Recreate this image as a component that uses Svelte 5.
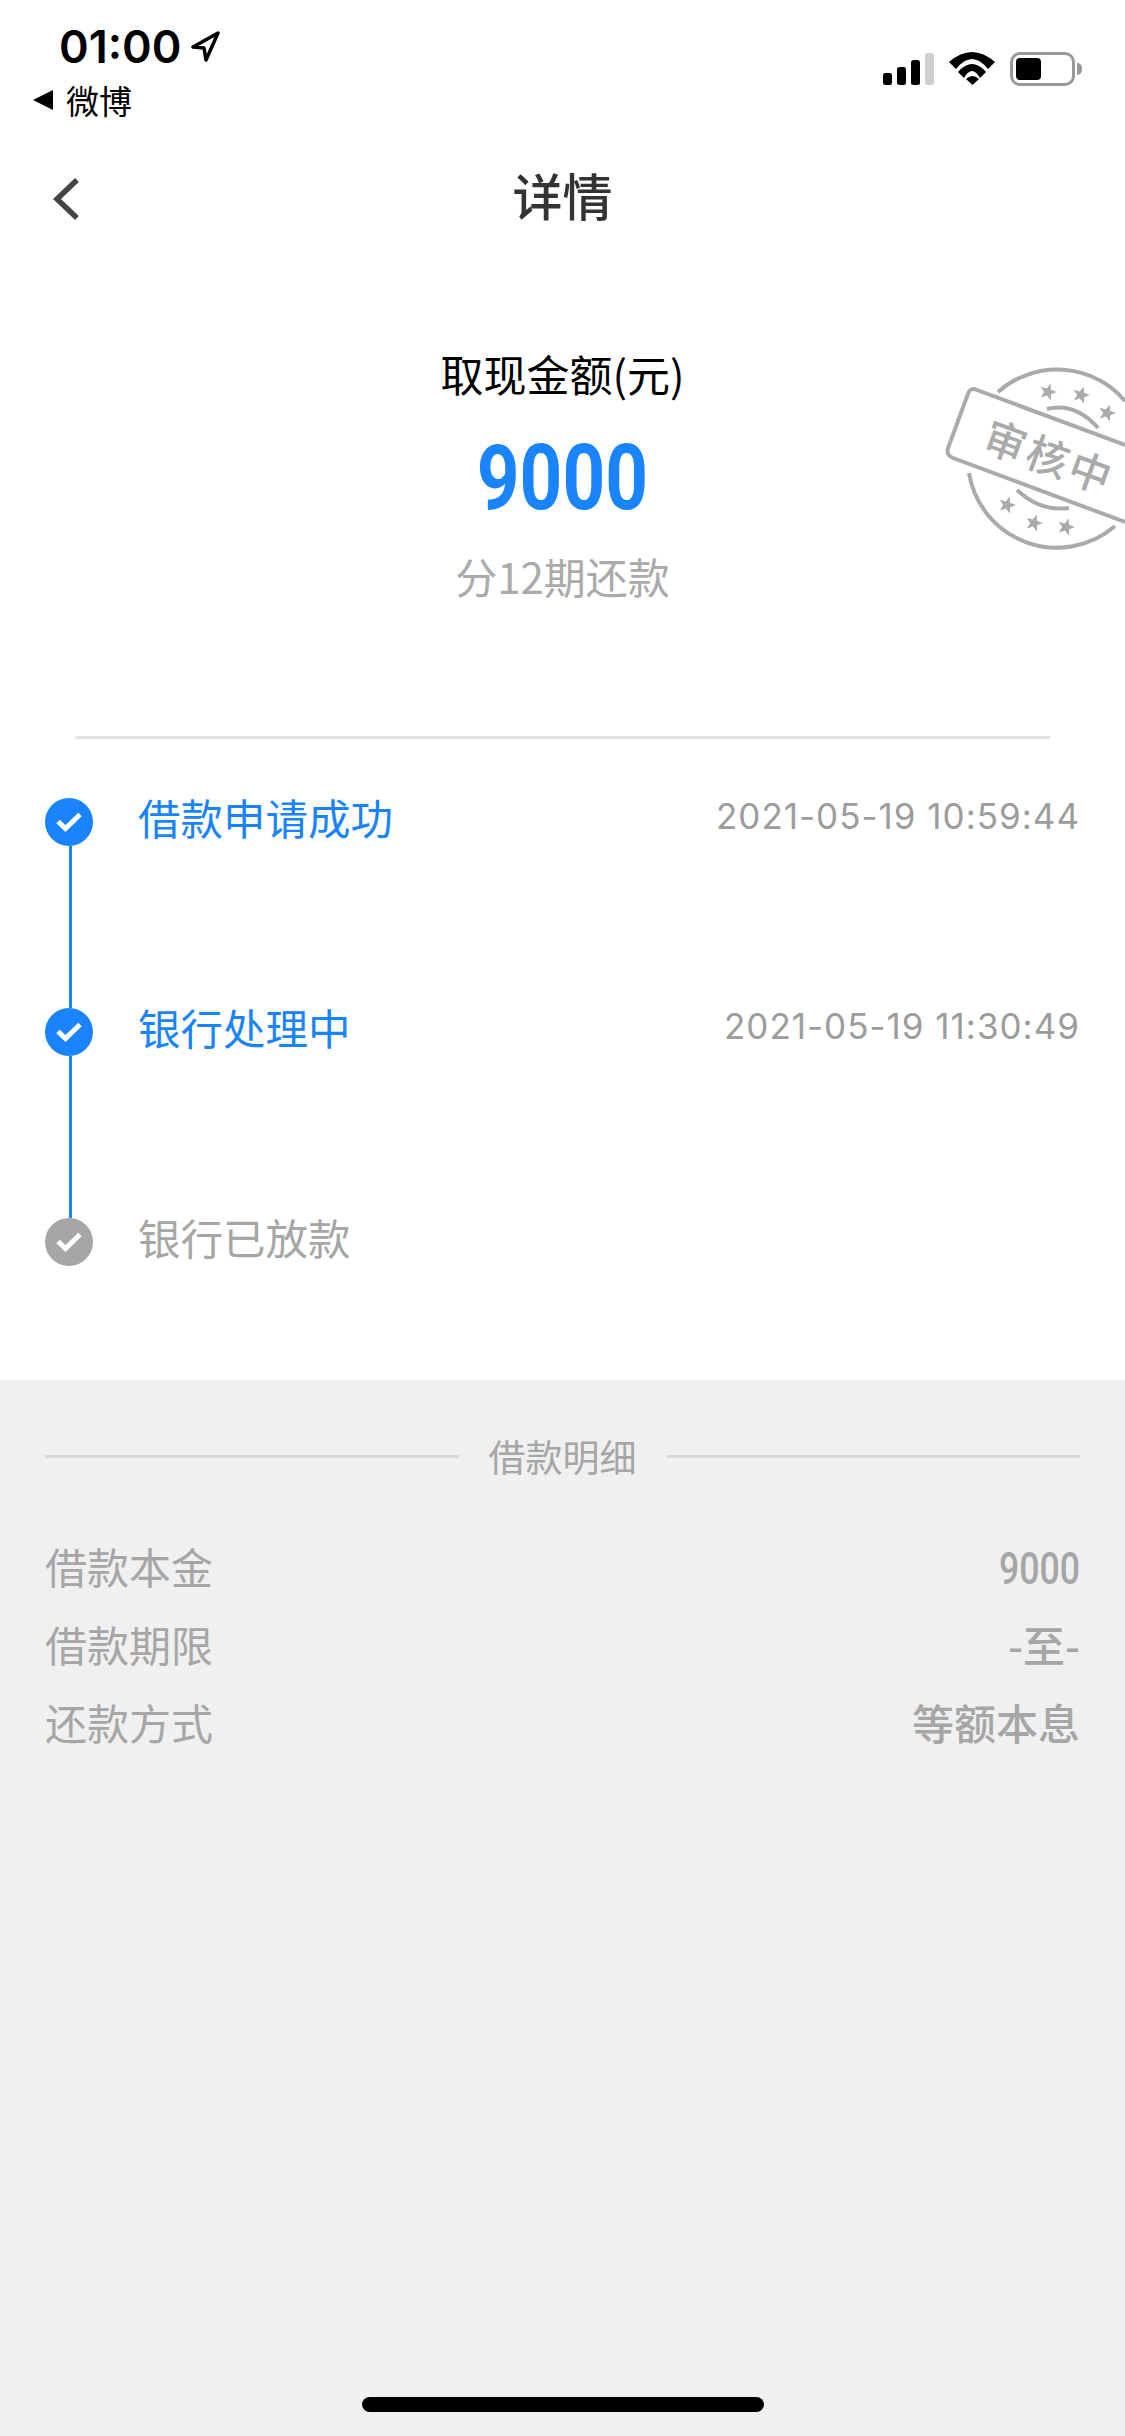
<script>
    const steps = [
        { title: '借款申请成功', time: '2021-05-19 10:59:44', done: true },
        { title: '银行处理中', time: '2021-05-19 11:30:49', done: true },
        { title: '银行已放款', time: '', done: false }
    ]

    const details = [
        { label: '借款本金', value: '9000', num: true },
        { label: '借款期限', value: '-至-' },
        { label: '还款方式', value: '等额本息' }
    ]

    const stars = [[1048, 392], [1081, 395], [1107, 413], [1007, 505], [1034, 523], [1066, 527]]

    function starPoints(cx, cy) {
        let pts = []
        for (let i = 0; i < 10; i++) {
            const r = i % 2 ? 3.8 : 9
            const a = -Math.PI / 2 + 0.3 + i * Math.PI / 5
            pts.push((cx + r * Math.cos(a)).toFixed(1) + ',' + (cy + r * Math.sin(a)).toFixed(1))
        }
        return pts.join(' ')
    }
</script>

<div class="page">
    <div class="status">
        <div class="status-left">
            <div class="clock">
                <span>01:00</span>
                <svg class="arrow" width="30" height="32" viewBox="0 0 30 32">
                    <path d="M28 2 L3 16 L14 17 L16 29 Z" fill="none" stroke="#000" stroke-width="3.5" stroke-linejoin="round"/>
                </svg>
            </div>
            <div class="backapp">
                <svg width="22" height="20" viewBox="0 0 22 20"><path d="M21 0 V20 L1 10 Z" fill="#000"/></svg>
                <span>微博</span>
            </div>
        </div>
        <div class="status-right">
            <div class="signal">
                <i style="height: 12px"></i>
                <i style="height: 18px"></i>
                <i style="height: 25px"></i>
                <i class="off" style="height: 32px"></i>
            </div>
            <svg width="46" height="33" viewBox="0 0 46 33">
                <path d="M0 10 Q23 -10 46 10 L39 17 Q23 -3 7 17 Z" fill="#000"/>
                <path d="M9 20 Q23 4 37 20 L31 26 Q23 12 15 26 Z" fill="#000"/>
                <path d="M17 27 Q23.5 21 30 27 L23.5 33 Z" fill="#000"/>
            </svg>
            <div class="battery">
                <div class="shell"><div class="charge"></div></div>
                <div class="nub"></div>
            </div>
        </div>
    </div>

    <div class="nav">
        <svg class="back" width="28" height="44" viewBox="0 0 28 44">
            <path d="M25 3 L5 22 L25 41" fill="none" stroke="#444" stroke-width="5.5"/>
        </svg>
        <div class="title">详情</div>
    </div>

    <div class="hero">
        <div class="hero-label">取现金额(元)</div>
        <div class="hero-amount">9000</div>
        <div class="hero-sub">分12期还款</div>
        <svg class="stamp" width="205" height="200" viewBox="920 350 205 200">
            <g fill="none" stroke="#aaa" stroke-width="4">
                <path d="M998 392 A89 89 0 0 1 1125 401"/>
                <path d="M969 473 A89 89 0 0 0 1115 526"/>
                <path d="M1047 409 Q1075 402 1098 428"/>
                <path d="M1017 490 Q1040 512 1069 508"/>
                <path d="M1125 445 L977 390 Q970 387 968 394 L948 448 Q946 455 953 458 L1125 522"/>
            </g>
            {#each stars as s}
                <polygon points={starPoints(s[0], s[1])} fill="#aaa"/>
            {/each}
            <text x="1049" y="473" transform="rotate(20 1049 458)" text-anchor="middle" class="stamp-text">审核中</text>
        </svg>
    </div>

    <div class="rule"></div>

    <div class="timeline">
        {#each steps as step, i}
            <div class="step">
                <div class="rail">
                    <div class="dot" class:grey={!step.done}>
                        <svg width="26" height="20" viewBox="0 0 26 20">
                            <path d="M2 9.5 L9.5 16.5 L24 2.5" fill="none" stroke="#fff" stroke-width="5"/>
                        </svg>
                    </div>
                    {#if i < steps.length - 1}
                        <div class="line"></div>
                    {/if}
                </div>
                <div class="step-title" class:grey={!step.done}>{step.title}</div>
                {#if step.time}
                    <div class="step-time">{step.time}</div>
                {/if}
            </div>
        {/each}
    </div>

    <div class="detail">
        <div class="detail-head">
            <div class="head-line"></div>
            <span>借款明细</span>
            <div class="head-line"></div>
        </div>
        <div class="rows">
            {#each details as row}
                <div class="row">
                    <span>{row.label}</span>
                    <span class="value" class:num={row.num}>{row.value}</span>
                </div>
            {/each}
        </div>
        <div class="home"></div>
    </div>
</div>

<style>
    :global(body) {
        margin: 0;
        background: #fff;
    }
    .page {
        width: 1125px;
        height: 2436px;
        display: flex;
        flex-direction: column;
        overflow: hidden;
        font-family: "Noto Sans CJK SC", "Noto Sans", sans-serif;
        color: #000;
    }
    .status {
        height: 131px;
        display: flex;
        justify-content: space-between;
        box-sizing: border-box;
    }
    .status-left {
        padding: 24px 0 0 32px;
    }
    .clock {
        display: flex;
        align-items: center;
        height: 46px;
        padding-left: 27px;
        gap: 9px;
        font: 600 45px/46px Inter, sans-serif;
    }
    .backapp {
        display: flex;
        align-items: center;
        gap: 12px;
        height: 40px;
        margin-top: 10px;
        font-size: 33px;
        line-height: 40px;
    }
    .status-right {
        display: flex;
        align-items: flex-start;
        padding: 52px 43px 0 0;
        gap: 15px;
    }
    .signal {
        display: flex;
        align-items: flex-end;
        gap: 5px;
        height: 33px;
    }
    .signal i {
        width: 9px;
        background: #000;
        border-radius: 2.5px;
    }
    .signal i.off {
        background: #cfcfcf;
    }
    .battery {
        display: flex;
        align-items: center;
        gap: 2px;
    }
    .shell {
        width: 65px;
        height: 34px;
        box-sizing: border-box;
        border: 3px solid #999;
        border-radius: 10px;
        padding: 3px;
    }
    .charge {
        width: 25px;
        height: 100%;
        background: #000;
        border-radius: 4px;
    }
    .nub {
        width: 5px;
        height: 12px;
        background: #999;
        border-radius: 0 5px 5px 0;
    }
    .nav {
        height: 130px;
        box-sizing: border-box;
        padding-bottom: 4px;
        position: relative;
        display: flex;
        align-items: center;
        justify-content: center;
    }
    .back {
        position: absolute;
        left: 52px;
        top: 46px;
    }
    .title {
        font-size: 50px;
        font-weight: 500;
        line-height: 60px;
        color: #333;
    }
    .hero {
        position: relative;
        height: 475px;
        box-sizing: border-box;
        padding-top: 84px;
        display: flex;
        flex-direction: column;
        align-items: center;
    }
    .hero-label {
        font-size: 43px;
        line-height: 56px;
    }
    .hero-amount {
        font-family: Roboto, sans-serif;
        font-weight: 700;
        font-size: 91px;
        line-height: 100px;
        margin-top: 27px;
        color: #1a84ff;
        transform: scaleX(0.82);
    }
    .hero-sub {
        font-size: 42px;
        line-height: 56px;
        margin-top: 20px;
        color: #aaa;
    }
    .stamp {
        position: absolute;
        right: 0;
        top: 89px;
    }
    .stamp-text {
        font-size: 42px;
        letter-spacing: 3px;
        fill: #aaa;
        font-weight: 500;
    }
    .rule {
        height: 3px;
        margin: 0 75px;
        background: #e2e2e2;
    }
    .timeline {
        flex: none;
        height: 641px;
        box-sizing: border-box;
        padding: 59px 45px 0 45px;
    }
    .step {
        display: flex;
        height: 210px;
    }
    .rail {
        width: 48px;
        display: flex;
        flex-direction: column;
        align-items: center;
    }
    .dot {
        flex: none;
        width: 48px;
        height: 48px;
        border-radius: 50%;
        background: #1a84ff;
        display: flex;
        align-items: center;
        justify-content: center;
    }
    .dot.grey {
        background: #a6a6a6;
    }
    .line {
        flex: 1;
        width: 3px;
        margin-left: 3px;
        background: #1a84ff;
    }
    .step-title {
        margin-left: 45px;
        font-size: 42.5px;
        line-height: 38px;
        color: #1a84ff;
        flex: 1;
    }
    .step-title.grey {
        color: #a6a6a6;
    }
    .step-time {
        font-family: Inter, sans-serif;
        font-size: 35px;
        line-height: 36px;
        letter-spacing: 1px;
        color: #9c9c9c;
    }
    .detail {
        flex: 1;
        background: #f0f0f0;
        box-sizing: border-box;
        padding: 56px 45px 0;
        display: flex;
        flex-direction: column;
        color: #a6a6a6;
    }
    .detail-head {
        display: flex;
        align-items: center;
        gap: 30px;
        font-size: 37px;
        line-height: 40px;
    }
    .head-line {
        flex: 1;
        height: 3px;
        background: #d9d9d9;
    }
    .rows {
        margin-top: 51px;
    }
    .row {
        display: flex;
        justify-content: space-between;
        font-size: 42px;
        line-height: 78px;
    }
    .value {
        font-weight: 500;
    }
    .value.num {
        font-family: Roboto, sans-serif;
        font-size: 44px;
        transform: translateY(3px) scaleX(0.81);
        transform-origin: right center;
    }
    .home {
        align-self: center;
        width: 402px;
        height: 15px;
        border-radius: 8px;
        background: #000;
        margin-top: auto;
        margin-bottom: 24px;
    }
</style>
